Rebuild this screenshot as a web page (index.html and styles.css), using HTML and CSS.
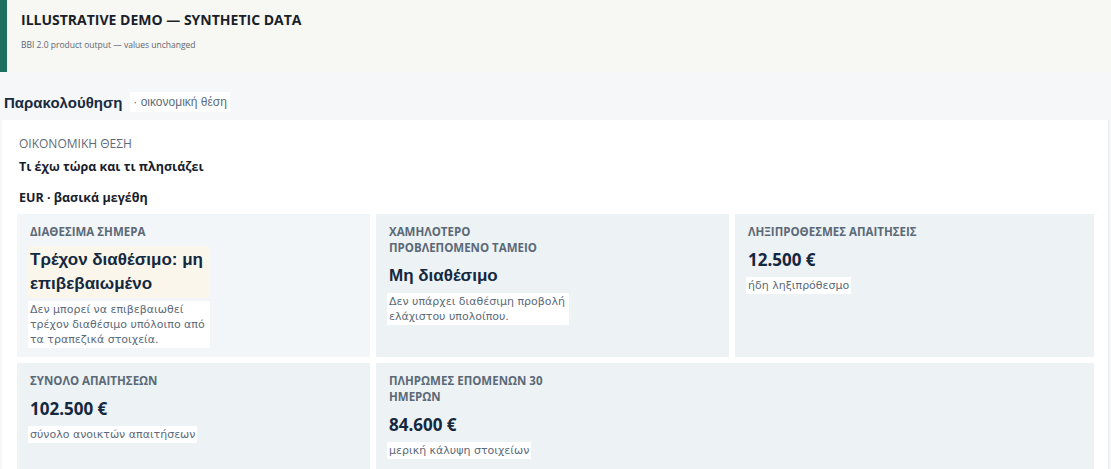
FILE: index.html
```html
<!DOCTYPE html>
<html lang="el">
<head>
    <meta charset="UTF-8">
    <meta name="viewport" content="width=device-width, initial-scale=1.0">
    <title>Παρακολούθηση</title>
    <link rel="stylesheet" href="styles.css">
</head>
<body>
    <header class="demo-banner">
        <h1>ILLUSTRATIVE DEMO — SYNTHETIC DATA</h1>
        <p>BBI 2.0 product output — values unchanged</p>
    </header>

    <div class="page-title">
        <h2>Παρακολούθηση</h2>
        <span class="tag">· οικονομική θέση</span>
    </div>

    <main class="panel">
        <div class="eyebrow">ΟΙΚΟΝΟΜΙΚΗ ΘΕΣΗ</div>
        <h3 class="panel-title">Τι έχω τώρα και τι πλησιάζει</h3>
        <h4 class="group-title">EUR · βασικά μεγέθη</h4>

        <div class="cards">
            <div class="card card-soft">
                <div class="label">ΔΙΑΘΕΣΙΜΑ ΣΗΜΕΡΑ</div>
                <div class="value value-text value-warn">Τρέχον διαθέσιμο: μη επιβεβαιωμένο</div>
                <div class="note">Δεν μπορεί να επιβεβαιωθεί τρέχον διαθέσιμο υπόλοιπο από τα τραπεζικά στοιχεία.</div>
            </div>
            <div class="card">
                <div class="label">ΧΑΜΗΛΟΤΕΡΟ ΠΡΟΒΛΕΠΟΜΕΝΟ ΤΑΜΕΙΟ</div>
                <div class="value value-text">Μη διαθέσιμο</div>
                <div class="note">Δεν υπάρχει διαθέσιμη προβολή ελάχιστου υπολοίπου.</div>
            </div>
            <div class="card">
                <div class="label">ΛΗΞΙΠΡΟΘΕΣΜΕΣ ΑΠΑΙΤΗΣΕΙΣ</div>
                <div class="value">12.500 €</div>
                <div class="note">ήδη ληξιπρόθεσμο</div>
            </div>
            <div class="card">
                <div class="label">ΣΥΝΟΛΟ ΑΠΑΙΤΗΣΕΩΝ</div>
                <div class="value">102.500 €</div>
                <div class="note">σύνολο ανοικτών απαιτήσεων</div>
            </div>
            <div class="card card-wide">
                <div class="label">ΠΛΗΡΩΜΕΣ ΕΠΟΜΕΝΩΝ 30 ΗΜΕΡΩΝ</div>
                <div class="value">84.600 €</div>
                <div class="note">μερική κάλυψη στοιχείων</div>
            </div>
        </div>
    </main>
</body>
</html>
```

FILE: styles.css
```css
* {
    margin: 0;
    padding: 0;
    box-sizing: border-box;
}
body {
    font-family: 'Open Sans', sans-serif;
    background-color: #f5f7f9;
    color: #1b2735;
}

/* demo banner */
.demo-banner {
    height: 72px;
    background-color: #f7f7f4;
    border-left: 7px solid #1d6f60;
    padding: 11px 14px;
}
.demo-banner h1 {
    font-size: 14px;
    font-weight: 700;
    line-height: 18px;
    color: #1a1f29;
}
.demo-banner p {
    margin-top: 10px;
    font-size: 8.5px;
    color: #5f6670;
}

/* page heading */
.page-title {
    display: flex;
    align-items: center;
    gap: 8px;
    height: 48px;
    padding: 12px 4px 0;
}
.page-title h2 {
    font-family: 'Liberation Sans', Arial, sans-serif;
    font-size: 15px;
    font-weight: 700;
    color: #182a3d;
}
.tag {
    background-color: #fff;
    font-family: 'Liberation Sans', Arial, sans-serif;
    font-size: 12px;
    line-height: 20px;
    padding: 0 3px;
    color: #5d6d7c;
}

/* white panel */
.panel {
    background-color: #fff;
    margin: 0 2px 0 2px;
    border-right: 1px solid #e8ecef;
    padding: 16px 15px 0 15px;
    min-height: 349px;
}
.eyebrow {
    padding-left: 2px;
    font-size: 12px;
    line-height: 16px;
    color: #5f6b78;
}
.panel-title {
    padding-left: 2px;
    margin-top: 7px;
    font-size: 12.5px;
    line-height: 16px;
    font-weight: 700;
    color: #17202b;
}
.group-title {
    padding-left: 2px;
    margin-top: 15px;
    font-size: 12.5px;
    line-height: 16px;
    font-weight: 700;
    color: #17202b;
}

/* metric cards */
.cards {
    display: grid;
    grid-template-columns: 353px 353px 359px;
    gap: 6px;
    margin-top: 8px;
}
.card {
    background-color: #edf2f5;
    padding: 10px 13px 9px;
    min-height: 143px;
}
.card-soft {
    background-color: #f2f6f9;
}
.card-wide {
    grid-column: span 2;
}
.label {
    max-width: 180px;
    font-size: 11.5px;
    font-weight: 700;
    line-height: 16px;
    color: #5b6977;
}
.value {
    width: fit-content;
    max-width: 182px;
    margin: 6px 0 0 -2px;
    padding: 2px;
    font-size: 17px;
    font-weight: 700;
    line-height: 24px;
    color: #14283f;
}
.value-text {
    font-family: 'Liberation Sans', Arial, sans-serif;
}
.value-warn {
    background-color: #fbf6ec;
}
.note {
    width: fit-content;
    max-width: 182px;
    margin: 3px 0 0 -2px;
    padding: 1px 2px;
    background-color: #fff;
    font-family: 'DejaVu Sans', sans-serif;
    font-size: 11px;
    line-height: 15px;
    color: #5c6a79;
}
```
